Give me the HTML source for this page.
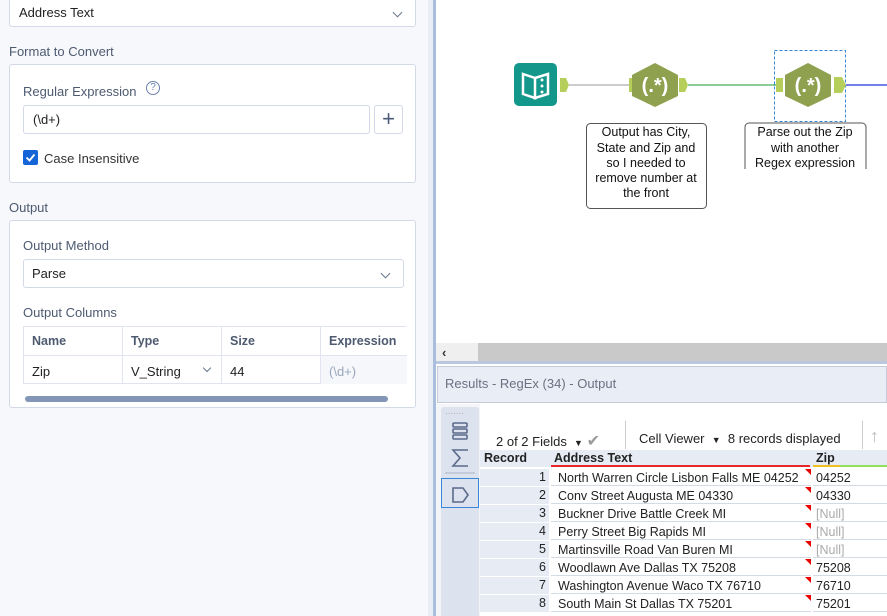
<!DOCTYPE html>
<html><head><meta charset="utf-8"><style>
*{box-sizing:border-box;margin:0;padding:0}
body{width:887px;height:616px;overflow:hidden;position:relative;font-family:"Liberation Sans",sans-serif;background:#fff}
.abs{position:absolute}
#left{left:0;top:0;width:428px;height:616px;background:#f6f8fc}
.box{position:absolute;background:#fff;border:1px solid #d3d9e6;border-radius:3px}
.lbl{position:absolute;font-size:13px;color:#4d5a70}
.txt{position:absolute;font-size:13px;color:#222}
.dd::after{content:"";position:absolute;right:14px;top:10px;width:6px;height:6px;border-right:1.3px solid #6a7890;border-bottom:1.3px solid #6a7890;transform:rotate(45deg)}
.cell{position:absolute;font-size:12.5px;color:#222;white-space:nowrap}
</style></head><body>
<div id="left" class="abs">
  <div class="box dd" style="left:9px;top:-2px;width:407px;height:29px"><span class="txt" style="left:9px;top:6px">Address Text</span></div>
  <div class="lbl" style="left:9px;top:44px">Format to Convert</div>
  <div class="box" style="left:9px;top:64px;width:407px;height:119px">
    <div class="lbl" style="left:13px;top:19px">Regular Expression</div>
    <div class="abs" style="left:136px;top:16px;width:14px;height:14px;border:1.3px solid #6c82b0;border-radius:50%;font-size:10px;color:#6c82b0;text-align:center;line-height:12px">?</div>
    <div class="box" style="left:13px;top:40px;width:347px;height:29px"><span class="txt" style="left:9px;top:6px">(\d+)</span></div>
    <div class="box" style="left:364px;top:40px;width:29px;height:29px;font-size:22px;color:#4a5a78;text-align:center;line-height:26px">+</div>
    <div class="abs" style="left:13px;top:85px;width:15px;height:15px;background:#1565d8;border-radius:2px"><svg width="15" height="15"><path d="M3.5 7.5l3 3 5-6" stroke="#fff" stroke-width="1.8" fill="none"/></svg></div>
    <div class="txt" style="left:34px;top:86px;color:#333">Case Insensitive</div>
  </div>
  <div class="lbl" style="left:9px;top:200px">Output</div>
  <div class="box" style="left:9px;top:220px;width:407px;height:188px">
    <div class="lbl" style="left:13px;top:17px">Output Method</div>
    <div class="box dd" style="left:13px;top:38px;width:381px;height:29px"><span class="txt" style="left:8px;top:6px">Parse</span></div>
    <div class="lbl" style="left:13px;top:84px">Output Columns</div>
    <div class="abs" style="left:13px;top:105px;width:383px;height:58px;border-top:1px solid #dfe4ee;border-bottom:1px solid #dfe4ee;border-left:1px solid #dfe4ee">
      <div class="abs" style="left:0;top:28px;width:383px;height:1px;background:#dfe4ee"></div>
      <div class="abs" style="left:98px;top:0;width:1px;height:57px;background:#dfe4ee"></div>
      <div class="abs" style="left:197px;top:0;width:1px;height:57px;background:#dfe4ee"></div>
      <div class="abs" style="left:296px;top:0;width:1px;height:57px;background:#dfe4ee"></div>
      <div class="abs" style="left:297px;top:29px;width:86px;height:28px;background:#f5f7fb"></div>
      <b class="lbl" style="left:8px;top:7px;font-size:12.5px">Name</b>
      <b class="lbl" style="left:107px;top:7px;font-size:12.5px">Type</b>
      <b class="lbl" style="left:206px;top:7px;font-size:12.5px">Size</b>
      <b class="lbl" style="left:305px;top:7px;font-size:12.5px">Expression</b>
      <span class="txt" style="left:8px;top:37px">Zip</span>
      <span class="txt" style="left:107px;top:37px">V_String</span>
      <div class="abs" style="left:180px;top:38px;width:6px;height:6px;border-right:1.3px solid #6a7890;border-bottom:1.3px solid #6a7890;transform:rotate(45deg)"></div>
      <span class="txt" style="left:206px;top:37px">44</span>
      <span class="txt" style="left:305px;top:37px;color:#9aa6bc">(\d+)</span>
    </div>
    <div class="abs" style="left:15px;top:175px;width:363px;height:6px;border-radius:3px;background:#8496b8"></div>
  </div>
</div>
<div class="abs" style="left:428px;top:0;width:5px;height:616px;background:#e9edf5"></div>
<div class="abs" style="left:433px;top:0;width:3px;height:616px;background:#a9bddd"></div>

<svg class="abs" style="left:436px;top:0" width="451" height="343">
  <rect x="78" y="63" width="43" height="43" rx="5" fill="#12978a"/>
  <path d="M87 74 l12 4 v20 l-12 -4z M99 78 l13 -4 v20 l-13 4z" fill="none" stroke="#fff" stroke-width="2.5"/>
  <circle cx="106" cy="80" r="1.5" fill="#fff"/><circle cx="106" cy="86" r="1.5" fill="#fff"/><circle cx="106" cy="92" r="1.5" fill="#fff"/>
  <path d="M124 78h6l3 7-3 7h-6z" fill="#b5cf5a"/>
  <line x1="133" y1="85" x2="193" y2="85" stroke="#999" stroke-width="1"/>
  <path d="M193 78h7v14h-7z" fill="#b5cf5a"/>
  <polygon points="219,63 242,75 242,96 219,107 196,96 196,75" fill="#8fa04f"/>
  <text x="219" y="92" font-family="Liberation Sans" font-weight="bold" font-size="20" fill="#fff" text-anchor="middle">(.*)</text>
  <path d="M243 78h6l3 7-3 7h-6z" fill="#b5cf5a"/>
  <line x1="252" y1="85" x2="340" y2="85" stroke="#1a9a30" stroke-width="1"/>
  <path d="M340 78h7v14h-7z" fill="#b5cf5a"/>
  <rect x="338.5" y="50.5" width="71" height="71" fill="none" stroke="#3a86d6" stroke-dasharray="3,2"/>
  <polygon points="372,63 395,75 395,96 372,107 349,96 349,75" fill="#8fa04f"/>
  <text x="372" y="92" font-family="Liberation Sans" font-weight="bold" font-size="20" fill="#fff" text-anchor="middle">(.*)</text>
  <path d="M398 77h8l4 8-4 8h-8z" fill="#b5cf5a"/>
  <line x1="410" y1="85" x2="451" y2="85" stroke="#2233dd" stroke-width="1.2"/>
  <rect x="150.5" y="123.5" width="120" height="85" rx="4" fill="#fff" stroke="#555"/>
  <g font-family="Liberation Sans" font-size="12.5" fill="#111" text-anchor="middle">
  <text x="210" y="136">Output has City,</text><text x="210" y="152">State and Zip and</text><text x="210" y="167">so I needed to</text><text x="210" y="182">remove number at</text><text x="210" y="197">the front</text>
  <text x="369" y="136">Parse out the Zip</text><text x="369" y="152">with another</text><text x="369" y="167">Regex expression</text>
  </g>
  <path d="M309 169 V127 a4 4 0 0 1 4 -4 H426 a4 4 0 0 1 4 4 V169" fill="none" stroke="#555"/>
</svg>
<div class="abs" style="left:436px;top:343px;width:42px;height:18px;background:#efefef;font-size:13px;font-weight:bold;color:#333;padding:2px 0 0 6px">‹</div>
<div class="abs" style="left:478px;top:343px;width:409px;height:18px;background:#c9c9c9"></div>
<div class="abs" style="left:436px;top:361px;width:451px;height:3px;background:#b9c7e0"></div>
<div class="abs" style="left:437px;top:366px;width:450px;height:37px;background:#e9edf6;border:1px solid #c5ccd8"></div>
<div class="abs" style="left:445px;top:376px;font-size:13px;color:#6b7180">Results - RegEx (34) - Output</div>
<div class="abs" style="left:436px;top:404px;width:451px;height:212px;background:#f3f5f9"></div>
<div class="abs" style="left:441px;top:407px;width:38px;height:209px;background:#dde3ee;border-radius:3px 3px 0 0"></div>
<div class="abs" style="left:445px;top:409px;font-size:8px;color:#999">·······</div>
<svg class="abs" style="left:441px;top:418px" width="38" height="90">
  <g fill="none" stroke="#5a6a8a" stroke-width="1.6">
  <rect x="12" y="5" width="14" height="4" rx="1"/><rect x="12" y="11" width="14" height="4" rx="1"/><rect x="12" y="17" width="14" height="4" rx="1"/>
  <path d="M27 32H12l7 8-7 8h15"/>
  <path d="M12 70h10l5 7-5 7H12z"/>
  </g>
  <line x1="4" y1="55" x2="34" y2="55" stroke="#aab4c8"/>
  <rect x="0.5" y="60.5" width="37" height="29" fill="none" stroke="#3a86d6"/>
</svg>
<div class="abs" style="left:480px;top:404px;width:407px;height:212px;background:#fff"></div>
<div class="abs" style="left:496px;top:431px;font-size:13px;color:#222">2 of 2 Fields &nbsp;<span style="font-size:9px">▼</span> <span style="color:#999;font-size:16px">✔</span></div>
<div class="abs" style="left:625px;top:421px;width:1px;height:28px;background:#ccc"></div>
<div class="abs" style="left:639px;top:431px;font-size:13px;color:#222">Cell Viewer &nbsp;<span style="font-size:9px">▼</span>&nbsp; 8 records displayed</div>
<div class="abs" style="left:862px;top:421px;width:1px;height:28px;background:#ccc"></div>
<div class="abs" style="left:870px;top:426px;font-size:18px;color:#bbb">↑</div>
<div class="abs" style="left:480px;top:450px;width:407px;height:17px;background:#e6ebf4"></div>
<b class="cell" style="left:484px;top:451px">Record</b>
<b class="cell" style="left:554px;top:451px">Address Text</b>
<b class="cell" style="left:816px;top:451px">Zip</b>
<div class="abs" style="left:551px;top:465px;width:259px;height:2px;background:#e8262a"></div>
<div class="abs" style="left:813px;top:465px;width:27px;height:2px;background:#f0c020"></div>
<div class="abs" style="left:840px;top:465px;width:47px;height:2px;background:#90e060"></div>
<div id="rows"></div>
<script>
const d=[["North Warren Circle Lisbon Falls ME 04252","04252"],["Conv Street Augusta ME 04330","04330"],["Buckner Drive Battle Creek MI","[Null]"],["Perry Street Big Rapids MI","[Null]"],["Martinsville Road Van Buren MI","[Null]"],["Woodlawn Ave Dallas TX 75208","75208"],["Washington Avenue Waco TX 76710","76710"],["South Main St Dallas TX 75201","75201"]];
let h="";d.forEach((r,i)=>{const y=469+i*18;
h+=`<div class="abs" style="left:480px;top:${y}px;width:69px;height:17px;background:#e6ebf4"></div>
<div class="abs" style="left:551px;top:${y}px;width:260px;height:17px;background:#fff;border-bottom:1px solid #d5dbe6"></div>
<div class="abs" style="left:813px;top:${y}px;width:74px;height:17px;border-bottom:1px solid #d5dbe6"></div>
<div class="abs" style="left:805px;top:${y}px;width:0;height:0;border-top:6px solid #e00;border-left:6px solid transparent"></div>
<div class="cell" style="left:480px;width:66px;text-align:right;top:${y+1}px">${i+1}</div>
<div class="cell" style="left:558px;top:${y+2}px">${r[0]}</div>
<div class="cell" style="left:816px;top:${y+2}px;color:${r[1][0]=='['?'#aaa':'#222'}">${r[1]}</div>`;});
document.getElementById("rows").innerHTML=h;
</script>
</body></html>
